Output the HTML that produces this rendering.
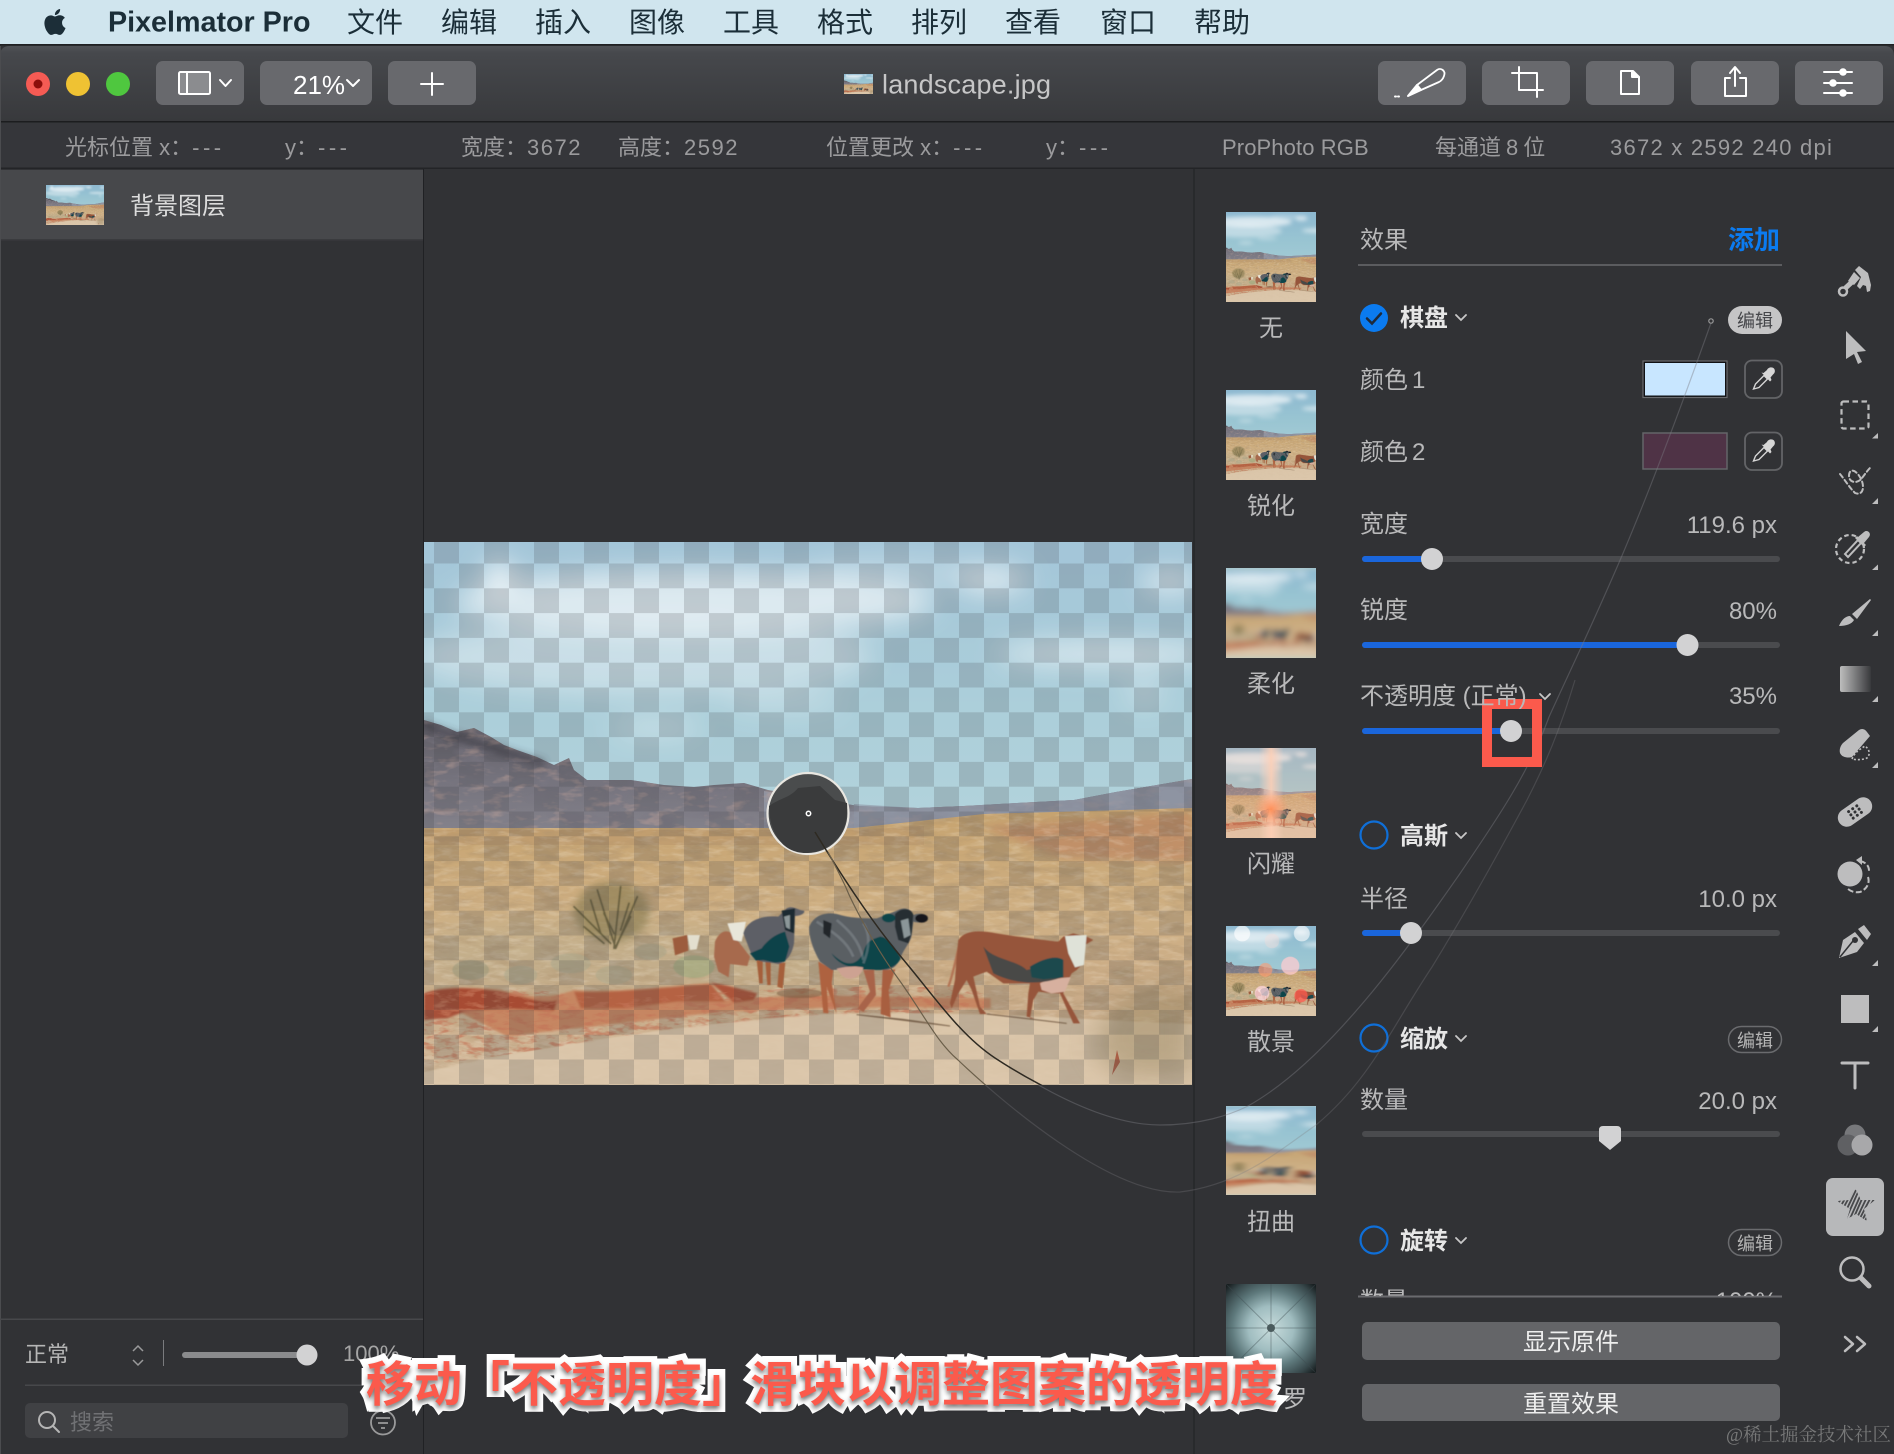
<!DOCTYPE html>
<html lang="zh"><head><meta charset="utf-8"><title>Pixelmator Pro</title>
<style>
html,body{margin:0;padding:0;background:#313235}
#p{position:relative;width:1894px;height:1454px;overflow:hidden;background:#313235;font-family:"Liberation Sans","Noto Sans CJK SC",sans-serif}
svg.a{position:absolute;left:0;top:0}
.t{position:absolute;white-space:nowrap;line-height:1;transform:translateY(-50%)}
.m{color:#1b2e38;font-size:28px}
.i{color:#9b9b9d;font-size:22px}
.i b{font-weight:400;letter-spacing:3.5px}
.i u{text-decoration:none;letter-spacing:1.5px}
.l{color:#b9b9ba;font-size:24px}
.c{text-align:center;transform:translate(-50%,-50%)}
.b{font-weight:700;color:#e6e6e6;font-size:24px}
.r{text-align:right;right:117px}
.p{font-size:18px;color:#b5b5b5}
</style></head><body><div id="p">
<svg class="a" width="1894" height="1454" viewBox="0 0 1894 1454">
<defs>
<linearGradient id="sky" x1="0" y1="0" x2="0" y2="1"><stop offset="0" stop-color="#8db8d0"/><stop offset=".55" stop-color="#98c4d2"/><stop offset="1" stop-color="#a2cad4"/></linearGradient>
<linearGradient id="gnd" x1="0" y1="0" x2="0" y2="1"><stop offset="0" stop-color="#c6a36f"/><stop offset=".4" stop-color="#cfb084"/><stop offset=".7" stop-color="#c9ab88"/><stop offset="1" stop-color="#d8c0a2"/></linearGradient>
<linearGradient id="mt" x1="0" y1="0" x2="0" y2="1"><stop offset="0" stop-color="#5f5c64"/><stop offset=".5" stop-color="#74727c"/><stop offset="1" stop-color="#85838c"/></linearGradient>
<linearGradient id="tb" x1="0" y1="0" x2="0" y2="1"><stop offset="0" stop-color="#505256"/><stop offset=".1" stop-color="#46484c"/><stop offset="1" stop-color="#38393c"/></linearGradient>
<linearGradient id="grad"><stop offset="0" stop-color="#bdbdbd"/><stop offset="1" stop-color="#38393c"/></linearGradient>
<radialGradient id="kal" r="72%"><stop offset="0" stop-color="#c8dcdc"/><stop offset=".35" stop-color="#a0bdc0"/><stop offset=".6" stop-color="#5f7a7d"/><stop offset=".82" stop-color="#37474a"/><stop offset="1" stop-color="#0c0f10"/></radialGradient>
<radialGradient id="fl"><stop offset="0" stop-color="#ff8a50" stop-opacity=".9"/><stop offset="1" stop-color="#ff9a70" stop-opacity="0"/></radialGradient>
<linearGradient id="fl2"><stop offset="0" stop-color="#ffe0d0" stop-opacity="0"/><stop offset=".5" stop-color="#ffd8c0" stop-opacity=".85"/><stop offset="1" stop-color="#ffe0d0" stop-opacity="0"/></linearGradient>
<filter id="b3" x="-30%" y="-100%" width="160%" height="300%"><feGaussianBlur stdDeviation="13"/></filter>
<filter id="b4" x="-30%" y="-100%" width="160%" height="300%"><feGaussianBlur stdDeviation="4"/></filter>
<filter id="b1" x="-10%" y="-10%" width="120%" height="120%"><feGaussianBlur stdDeviation=".8"/></filter>
<filter id="b2" x="-5%" y="-5%" width="110%" height="110%"><feGaussianBlur stdDeviation="1.600"/></filter>
<filter id="b5" x="-5%" y="-5%" width="110%" height="110%"><feGaussianBlur stdDeviation="3.500"/></filter>
<filter id="soft" x="-5%" y="-5%" width="110%" height="110%"><feGaussianBlur stdDeviation="20"/></filter>
<filter id="mot" x="-5%" y="-5%" width="110%" height="110%"><feGaussianBlur stdDeviation="22 7"/></filter>
<filter id="grain" x="0" y="0" width="100%" height="100%"><feTurbulence type="fractalNoise" baseFrequency=".035 .12" numOctaves="4" seed="7"/><feColorMatrix values="0 0 0 0 .42  0 0 0 0 .29  0 0 0 0 .16  3 0 0 0 -1.4"/></filter>
<filter id="grain2" x="0" y="0" width="100%" height="100%"><feTurbulence type="fractalNoise" baseFrequency=".06 .2" numOctaves="3" seed="21"/><feColorMatrix values="0 0 0 0 .93  0 0 0 0 .86  0 0 0 0 .74  3 0 0 0 -1.4"/></filter>
<filter id="rock" x="0" y="0" width="100%" height="100%"><feTurbulence type="fractalNoise" baseFrequency=".03 .07" numOctaves="4" seed="3"/><feColorMatrix values="0 0 0 0 .2  0 0 0 0 .19  0 0 0 0 .23  3.6 0 0 0 -1.65"/></filter>
<filter id="rust" x="0" y="0" width="100%" height="100%"><feTurbulence type="fractalNoise" baseFrequency=".05 .12" numOctaves="3" seed="12"/><feColorMatrix values="0 0 0 0 .52  0 0 0 0 .36  0 0 0 0 .32  4 0 0 0 -2.1"/></filter>
<filter id="redn" x="0" y="0" width="100%" height="100%"><feTurbulence type="fractalNoise" baseFrequency=".07 .18" numOctaves="3" seed="5"/><feColorMatrix values="0 0 0 0 .55  0 0 0 0 .18  0 0 0 0 .1  4 0 0 0 -1.9"/></filter>
<clipPath id="gc"><path d="M0 286H430L560 272L768 266V543H0Z"/></clipPath>
<clipPath id="mc"><path d="M0 178L17 183 33 190 50 186 67 195 80 203 93 208 113 215 130 223 145 216 150 228 163 238 183 238 207 238 240 243 270 245 290 243 320 241 344 248 400 258 434 264 494 266 540 264 593 261 650 258 692 250 768 237V292H0Z"/></clipPath>
<clipPath id="rc"><path d="M0 452C20 446 80 444 130 450 190 462 260 452 330 448 440 444 500 442 560 450V470C440 472 380 476 250 490 120 505 50 520 0 522Z"/></clipPath>
<clipPath id="in"><rect x="424" y="542" width="768" height="543"/></clipPath>
<clipPath id="out"><path d="M0 0H1894V1454H0ZM424 542V1085H1192V542Z" clip-rule="evenodd"/></clipPath>
<clipPath id="star"><path d="M-18-5L-6-6 0-18 6-6 20-6 9 3 12 15 1 8-8 13-5 3Z"/></clipPath>
<pattern id="chk" x="10" y="-3.3" width="50" height="49.6" patternUnits="userSpaceOnUse"><rect width="25" height="24.8" fill="#3d4042"/><rect x="25" y="24.8" width="25" height="24.8" fill="#3d4042"/></pattern>
<g id="skyg">
<rect width="768" height="300" fill="url(#sky)"/>
<g fill="#fff" filter="url(#b3)">
<ellipse cx="270" cy="60" rx="240" ry="32" opacity=".65"/><ellipse cx="220" cy="115" rx="230" ry="38" opacity=".4"/><ellipse cx="75" cy="35" rx="15" ry="18" opacity=".8"/><ellipse cx="568" cy="38" rx="36" ry="14" opacity=".65"/><ellipse cx="745" cy="40" rx="28" ry="10" opacity=".75"/><ellipse cx="680" cy="112" rx="110" ry="13" opacity=".6"/><ellipse cx="232" cy="186" rx="44" ry="8" opacity=".45"/><ellipse cx="360" cy="160" rx="60" ry="10" opacity=".3"/><ellipse cx="720" cy="150" rx="20" ry="16" opacity=".3"/><ellipse cx="470" cy="30" rx="90" ry="16" opacity=".25"/>
</g>
</g>
<g id="land">
<path d="M0 178L17 183 33 190 50 186 67 195 80 203 93 208 113 215 130 223 145 216 150 228 163 238 183 238 207 238 240 243 270 245 290 243 320 241 344 248 400 258 434 264 494 266 540 264 593 261 650 258 692 250 768 237V292H0Z" fill="url(#mt)"/>
<path d="M340 249L434 264 494 266 540 264 593 261 650 258 692 250 768 237V292H340Z" fill="#8f93a0"/>
<rect width="768" height="292" filter="url(#rock)" clip-path="url(#mc)" opacity=".55"/>
<rect width="768" height="292" filter="url(#rust)" clip-path="url(#mc)" opacity=".45"/>
<path d="M0 183C30 195 80 210 120 222" fill="none" stroke="#33323a" stroke-width="7" opacity=".6" filter="url(#b4)"/>
<path d="M430 262L494 266 540 264 593 261 650 258 692 250 768 237V292H430Z" fill="#8e95a3" opacity=".6"/>
<path d="M0 286H430L560 272L768 266V543H0Z" fill="url(#gnd)"/>
<path d="M560 285L768 270V320L640 316Z" fill="#bb7a5c" opacity=".5" filter="url(#b4)"/>
<path d="M0 288H430L500 284V303H0Z" fill="#b8946a" opacity=".45"/>
<path d="M0 390C100 370 300 380 420 400L420 448 0 450Z" fill="#b9b092" opacity=".42" filter="url(#b3)"/>
<rect y="260" width="768" height="283" filter="url(#grain)" clip-path="url(#gc)" opacity=".42"/>
<rect y="260" width="768" height="283" filter="url(#grain2)" clip-path="url(#gc)" opacity=".22"/>
<ellipse cx="188" cy="370" rx="38" ry="30" fill="#85794f" opacity=".6" filter="url(#b4)"/>
<g transform="translate(0 158) scale(.3333)" fill="none" stroke="#575135" stroke-width="5" stroke-linecap="round" filter="url(#b2)">
<path d="M575 745L520 570M570 745L590 560M575 745L640 590M560 730L450 620M540 730L480 680M575 740L620 650M530 700L500 600M570 700L540 640M590 690L615 610" opacity=".8"/>
<ellipse cx="810" cy="800" rx="62" ry="34" fill="#a3ab80" stroke="none" opacity=".7"/>
<ellipse cx="140" cy="810" rx="55" ry="30" fill="#99977a" stroke="none" opacity=".55"/>
<ellipse cx="290" cy="825" rx="50" ry="28" fill="#aca78c" stroke="none" opacity=".55"/>
<ellipse cx="440" cy="790" rx="60" ry="30" fill="#aca78c" stroke="none" opacity=".55"/>
<ellipse cx="570" cy="825" rx="55" ry="28" fill="#aca78c" stroke="none" opacity=".5"/>
<ellipse cx="680" cy="755" rx="48" ry="24" fill="#aca78c" stroke="none" opacity=".5"/>
</g>
<g transform="translate(0 158) scale(.3333)" filter="url(#b5)">
<path d="M0 880C60 860 120 860 230 870 300 890 370 900 450 870 560 880 700 860 860 850L900 900 1140 885 1400 890 1700 895 1700 925C1400 920 1200 920 900 935 640 965 400 990 250 1010 100 1070 0 1090Z" fill="#c5825c" opacity=".9"/>
<path d="M0 880C60 860 130 860 230 875 300 890 360 915 400 900L390 932 250 926 130 932 70 955 0 960Z" fill="#a1412a" opacity=".85"/>
<path d="M450 875C560 880 700 865 860 852L905 905 760 905 600 925 470 925Z" fill="#ae5236" opacity=".7"/>
<path d="M860 848C890 850 960 870 1000 880L990 900 930 908Z" fill="#a84a30" opacity=".9"/>
</g>
<rect y="430" width="768" height="100" filter="url(#redn)" clip-path="url(#rc)" opacity=".7"/>
<path d="M0 530C130 502 260 482 400 472 540 468 660 478 768 482V543H0Z" fill="#dcc8ac" opacity=".88" filter="url(#b1)"/>
<path d="M670 510C680 450 720 440 768 445V535H700Z" fill="#9a8763" opacity=".5" filter="url(#b3)"/>
<path d="M688 533L693 508 696 520Z" fill="#9e3c26" opacity=".7"/>
</g>
<g id="cows" transform="translate(226 348) scale(.3333)" filter="url(#b2)">
<ellipse cx="450" cy="310" rx="70" ry="14" fill="#7a5a40" opacity=".55"/>
<path d="M620 374L900 408 760 388Z M1010 372L1250 400 1100 382Z" fill="#5f4632" stroke="#5f4632" stroke-width="3" opacity=".75"/>
<path d="M68 145L112 135 115 182 75 196Z" fill="#9c5b3d"/><path d="M112 135L150 135 140 178 120 180Z" fill="#e3dfcf"/>
<path d="M195 155C210 118 240 112 262 150L300 200 292 228 240 222 236 262 205 245 192 200Z" fill="#a76a4e"/><path d="M232 100L288 95 275 155 250 150Z" fill="#e8e6da"/>
<path d="M320 212L328 280 338 280 338 212ZM346 212L352 285 362 285 362 212ZM388 220L382 290 398 296 406 218Z" fill="#a55f3a"/>
<path d="M280 130C290 95 330 75 385 80L410 55C430 45 440 60 462 62 467 70 450 78 435 78L432 160C425 195 410 215 385 222 355 215 320 220 305 195Z" fill="#5d5e66"/>
<path d="M300 190L335 175C350 155 370 135 405 125L418 170 405 215 375 218 340 210 318 212Z" fill="#0f4349"/>
<path d="M395 62L435 55 432 130 405 120Z" fill="#1f2b30"/><path d="M402 80L420 75 420 118 408 112Z" fill="#8c9799"/>
<path d="M505 215L520 368 535 370 530 290 560 372 545 280 550 240Z" fill="#ae6240"/>
<path d="M640 240L660 305 622 355 640 366 678 315 672 240Z" fill="#a8644a"/>
<path d="M698 240L692 372 722 382 716 300 736 238Z" fill="#a85e40"/>
<path d="M478 110C490 80 520 65 560 72 600 85 640 85 680 85L715 72 745 60C765 50 785 58 790 75L800 72C820 68 838 80 830 92 815 100 800 98 790 95L785 135C782 155 770 165 755 195 745 220 735 240 700 240L640 238 590 238 545 240 510 215C490 180 475 140 478 110Z" fill="#5a5f64"/>
<path d="M545 190C590 235 620 225 640 190 650 150 665 150 690 140 710 140 735 170 752 205 740 235 700 240 680 240L640 238C600 232 565 225 545 190Z" fill="#0f444a"/>
<path d="M500 95C540 120 590 150 610 200M560 90C590 115 630 150 640 210M640 100C660 130 660 170 640 220" fill="none" stroke="#8f9499" stroke-width="8" opacity=".45"/>
<path d="M520 90L545 100 540 145 520 130Z" fill="#22282c"/>
<path d="M560 236C590 228 620 228 640 232 635 260 600 278 575 256Z" fill="#cda292"/>
<path d="M735 72C755 50 785 55 790 75L785 130 775 160 745 150 735 110Z" fill="#252e33"/>
<path d="M752 92L775 85 782 135 762 145Z" fill="#8b9698"/>
<ellipse cx="716" cy="84" rx="20" ry="13" fill="#0f444a"/><ellipse cx="815" cy="85" rx="19" ry="13" fill="#15191b"/>
<path d="M932 150C918 200 912 245 895 290" fill="none" stroke="#b37555" stroke-width="7"/>
<path d="M925 150C945 120 985 120 1040 130 1100 140 1180 150 1225 155L1240 140 1270 130 1310 140 1330 150 1305 165 1300 220 1280 240 1265 250 1250 280 1240 310 1290 400 1270 400 1230 310 1210 310 1165 305 1150 330 1140 385 1155 385 1130 380 1135 310 1140 280 1060 280 1010 245 970 260 990 350 1010 372 990 372 965 300 950 270 925 310 905 355 900 340 915 270 920 200Z" fill="#96553a"/>
<path d="M1170 280C1190 268 1240 262 1262 262L1245 305 1205 310 1175 300Z" fill="#d7b09f"/>
<path d="M1000 170C1030 210 1100 210 1130 240 1180 230 1240 200 1240 260 1180 285 1100 285 1030 250 1000 210Z" fill="#4a4a46"/>
<path d="M1140 230C1180 205 1220 195 1240 210L1240 262 1180 268 1145 262Z" fill="#1e4a4e"/>
<path d="M1245 138L1310 135 1302 225 1275 232 1255 190Z" fill="#dfe2d8"/>
</g>
<g id="scene"><use href="#skyg"/><use href="#land"/><use href="#cows"/></g>
</defs>
<rect width="1894" height="45" fill="#d0e5ee"/>
<path d="M0 121V56Q0 46 10 46H1884Q1894 46 1894 56V121Z" fill="url(#tb)"/>
<rect y="44" width="1894" height="1.5" fill="#202123"/>
<rect y="121" width="1894" height="1.5" fill="#1c1d1f"/>
<rect y="122.500" width="1894" height="45.500" fill="#35363a"/>
<rect y="167.500" width="1894" height="1.500" fill="#232427"/>
<rect x="0" y="170" width="423" height="70" fill="#47484b"/>
<rect x="0" y="239" width="423" height="1.500" fill="#3a3b3e"/>
<rect x="423" y="169" width="1" height="1285" fill="#202124"/>
<rect x="1193.500" y="169" width="1" height="1285" fill="#202124"/>
<rect x="0" y="46" width="1" height="1408" fill="#4b4c4f"/>
<g transform="translate(42 9) scale(1.08)"><path fill="#1c2e38" d="M12.152 6.896c-.948 0-2.415-1.078-3.96-1.04-2.04.027-3.91 1.183-4.961 3.014-2.117 3.675-.546 9.103 1.519 12.09 1.013 1.454 2.208 3.09 3.792 3.039 1.52-.065 2.09-.987 3.935-.987 1.831 0 2.35.987 3.96.948 1.637-.026 2.676-1.48 3.676-2.948 1.156-1.688 1.636-3.325 1.662-3.415-.039-.013-3.182-1.221-3.22-4.857-.026-3.04 2.48-4.494 2.597-4.559-1.429-2.09-3.623-2.324-4.39-2.376-2-.156-3.675 1.09-4.61 1.09zM15.53 3.83c.843-1.012 1.4-2.427 1.245-3.83-1.207.052-2.662.805-3.532 1.818-.78.896-1.454 2.338-1.273 3.714 1.338.104 2.715-.688 3.559-1.701"/></g>
<circle cx="38" cy="84" r="12" fill="#f55b54"/><circle cx="38" cy="84" r="4.500" fill="#8c0f0c"/>
<circle cx="78" cy="84" r="12" fill="#efc233"/><circle cx="118" cy="84" r="12" fill="#4fc73f"/>
<g fill="#68696d">
<rect x="156" y="61" width="88" height="44" rx="7"/><rect x="260" y="61" width="112" height="44" rx="7"/><rect x="388" y="61" width="88" height="44" rx="7"/>
<rect x="1378" y="61" width="88" height="44" rx="7"/><rect x="1482" y="61" width="88" height="44" rx="7"/><rect x="1586" y="61" width="88" height="44" rx="7"/><rect x="1691" y="61" width="88" height="44" rx="7"/><rect x="1795" y="61" width="88" height="44" rx="7"/>
</g>
<g fill="none" stroke="#fff" stroke-width="2" stroke-linecap="round" stroke-linejoin="round">
<rect x="179" y="72" width="31" height="22" rx="1.500" fill="#8b8c8f"/><path d="M187 72V94"/><path d="M220 80l5.500 6 5.500-6"/>
<path d="M347 80l6 6 6-6"/>
<path d="M432 73V95M421 84H443"/>
<path d="M1417 85L1437 70C1441 67 1446 71 1444 76 1443 79 1441 81 1439 82L1421 90Z" stroke-width="1.800"/><path d="M1408 96L1417 85 1421 90Z" fill="#fff"/><path d="M1395 96.500h6" stroke-dasharray="1 2"/>
<path d="M1519 67V90H1543M1512 73H1537V97" stroke-width="2"/>
<path d="M1621 71H1633L1639 77V94H1621Z"/><path d="M1632 71L1639 77H1632Z" fill="#fff"/>
<path d="M1735 68V86M1730 73L1735 67 1740 73"/><path d="M1730 78H1725V96H1746V78H1740"/>
<path d="M1824 72H1852M1824 83H1852M1824 93H1852"/>
</g>
<g fill="#fff"><circle cx="1843" cy="72" r="3.800"/><circle cx="1833" cy="83" r="3.800"/><circle cx="1843" cy="93" r="3.800"/></g>
<svg x="844" y="74" width="29" height="20" viewBox="0 0 768 543" preserveAspectRatio="xMidYMid slice"><use href="#scene"/></svg>
<svg x="46" y="185" width="58" height="40" viewBox="0 0 768 543" preserveAspectRatio="xMidYMid slice"><use href="#scene"/></svg>
<svg x="424" y="542" width="768" height="543" viewBox="0 0 768 543"><use href="#skyg"/><rect width="768" height="300" fill="#e8f0f4" opacity=".25"/><use href="#land"/><rect width="768" height="543" fill="url(#chk)" opacity=".19"/><use href="#cows"/></svg>
<circle cx="808" cy="813.500" r="40.500" fill="#4a4c4d" stroke="#e9e7e1" stroke-width="2.200"/>
<path d="M769 806C780 798 790 798 798 788L820 786 835 800 847 803C848 818 845 830 838 838 820 858 790 858 778 838 771 828 769 815 769 806Z" fill="#3a3b3c"/>
<circle cx="808.500" cy="813.500" r="2.200" fill="none" stroke="#fff" stroke-width="1.500"/>
<g>
<svg x="1226" y="212" width="90" height="90" viewBox="0 0 768 543" preserveAspectRatio="xMidYMid slice"><use href="#scene"/></svg>
<svg x="1226" y="390" width="90" height="90" viewBox="0 0 768 543" preserveAspectRatio="xMidYMid slice"><use href="#scene"/></svg>
<svg x="1226" y="568" width="90" height="90" viewBox="0 0 768 543" preserveAspectRatio="xMidYMid slice"><rect width="768" height="543" fill="#b8cfc8"/><g filter="url(#soft)"><use href="#scene"/></g></svg>
<svg x="1226" y="748" width="90" height="90" viewBox="0 0 768 543" preserveAspectRatio="xMidYMid slice"><use href="#scene"/><rect x="310" width="150" height="543" fill="url(#fl2)"/><rect width="768" height="543" fill="#ffb090" opacity=".22"/><circle cx="385" cy="370" r="110" fill="url(#fl)"/></svg>
<svg x="1226" y="926" width="90" height="90" viewBox="0 0 768 543" preserveAspectRatio="xMidYMid slice"><use href="#scene"/><g filter="url(#b1)"><circle cx="210" cy="45" r="48" fill="#fff" opacity=".65"/><circle cx="570" cy="45" r="48" fill="#fff" opacity=".6"/><circle cx="390" cy="90" r="44" fill="#ffd9d4" opacity=".3"/><circle cx="500" cy="240" r="55" fill="#ffccd0" opacity=".75"/><circle cx="350" cy="265" r="42" fill="#ff9a70" opacity=".6"/><circle cx="330" cy="405" r="44" fill="#ffd8e0" opacity=".75"/><circle cx="565" cy="420" r="40" fill="#ff5a50" opacity=".75"/></g></svg>
<svg x="1226" y="1106" width="90" height="89" viewBox="0 0 768 543" preserveAspectRatio="xMidYMid slice"><rect width="768" height="543" fill="#b8cfc8"/><g filter="url(#mot)"><use href="#scene"/></g></svg>
<rect x="1226" y="1284" width="90" height="89" fill="url(#kal)"/>
<g stroke="#3e4c50" stroke-width="1" opacity=".4"><path d="M1226 1284L1316 1373M1316 1284L1226 1373M1271 1284V1373M1226 1328H1316"/></g>
<circle cx="1271" cy="1328" r="4" fill="#4a5a5c"/>
</g>
<rect x="1358" y="264" width="424" height="2" fill="#5b5c5f"/>
<rect x="1358" y="1295.500" width="424" height="2" fill="#6a6b6e"/>
<circle cx="1374" cy="318" r="14" fill="#0b7bf0"/><path d="M1367 318.500l5 5 9-10" fill="none" stroke="#1e2a3a" stroke-width="2.500" stroke-linecap="round"/>
<g fill="none" stroke="#0f6fd8" stroke-width="2.200"><circle cx="1374" cy="835" r="13.500"/><circle cx="1374" cy="1038" r="13.500"/><circle cx="1374" cy="1240" r="13.500"/></g>
<g fill="none" stroke="#c8c8c8" stroke-width="1.800" stroke-linecap="round"><path d="M1456 315l5 5 5-5M1456 833l5 5 5-5M1456 1036l5 5 5-5M1456 1238l5 5 5-5"/><path d="M1540 694l5 5 5-5"/></g>
<rect x="1728" y="306" width="54" height="28" rx="14" fill="#c5c5c6"/>
<g fill="none" stroke="#6a6b6e" stroke-width="1.500"><rect x="1728.500" y="1026.500" width="53" height="26" rx="13"/><rect x="1728.500" y="1229.500" width="53" height="26" rx="13"/></g>
<circle cx="1711" cy="321" r="2.200" fill="#313235" stroke="#999" stroke-width="1.200"/>
<rect x="1643" y="361" width="84" height="36.500" fill="#101114" stroke="#6a6b6e" stroke-width="1.200"/><rect x="1645" y="363" width="80" height="32.500" fill="#c8e6ff"/>
<rect x="1643" y="433" width="84" height="36" fill="#4f3346" stroke="#646568" stroke-width="1.500"/>
<g fill="none" stroke="#636467" stroke-width="1.800"><rect x="1745" y="360.500" width="37" height="37.500" rx="7"/><rect x="1745" y="432.500" width="37" height="37.500" rx="7"/></g>
<g id="dr"><path d="M1753.500 389L1755.500 384 1764 375.500 1767.500 379 1759 387.500Z" fill="none" stroke="#d6d6d6" stroke-width="1.400"/><path d="M1761.500 372.500L1763.500 373 1767 370C1768 367.500 1772 366.500 1774 368.500 1775.500 370.500 1775 373 1773 374.500L1770.500 377.500 1771.500 380 1770 381.500Z" fill="#d6d6d6"/></g>
<g transform="translate(0 72)"><path d="M1753.500 389L1755.500 384 1764 375.500 1767.500 379 1759 387.500Z" fill="none" stroke="#d6d6d6" stroke-width="1.400"/><path d="M1761.500 372.500L1763.500 373 1767 370C1768 367.500 1772 366.500 1774 368.500 1775.500 370.500 1775 373 1773 374.500L1770.500 377.500 1771.500 380 1770 381.500Z" fill="#d6d6d6"/></g>
<g fill="#4a4b4e"><rect x="1362" y="556" width="418" height="6" rx="3"/><rect x="1362" y="642" width="418" height="6" rx="3"/><rect x="1362" y="728" width="418" height="6" rx="3"/><rect x="1362" y="930" width="418" height="6" rx="3"/><rect x="1362" y="1131" width="418" height="6" rx="3"/></g>
<g fill="#1a66dc"><rect x="1362" y="556" width="70" height="6" rx="3"/><rect x="1362" y="642" width="325" height="6" rx="3"/><rect x="1362" y="728" width="149" height="6" rx="3"/><rect x="1362" y="930" width="49" height="6" rx="3"/></g>
<g fill="none">
<g clip-path="url(#in)"><path d="M815 832C835 865 870 920 902 958S960 1035 995 1058 1110 1125 1160 1125" stroke="#2e2a22" stroke-width="1.500"/><path d="M828 852C835 865 845 885 847 890S870 940 897 977 935 1040 958 1060C1000 1100 1110 1195 1180 1192" stroke="#6b5f4a" stroke-width="1.200"/></g>
<g clip-path="url(#out)" stroke="rgba(125,125,130,.42)" stroke-width="1.200"><path d="M995 1058C1050 1095 1110 1125 1160 1125 1200 1125 1230 1115 1248 1106 1330 1060 1410 945 1459 875 1500 815 1530 770 1549 717 1575 660 1590 630 1621 558 1650 490 1680 410 1711 323"/><path d="M958 1060C1000 1100 1110 1195 1180 1192 1240 1185 1280 1150 1316 1125 1370 1080 1390 1030 1432 967 1470 905 1500 850 1527 800 1545 765 1560 730 1575 680" stroke="rgba(125,125,130,.3)"/></g>
</g>
<g fill="#d2d2d3"><circle cx="1432" cy="559" r="11"/><circle cx="1687.500" cy="645" r="11"/><circle cx="1511" cy="731" r="11"/><circle cx="1411" cy="933" r="11"/><path d="M1599 1130Q1599 1126 1603 1126H1617Q1621 1126 1621 1130V1141L1610 1150 1599 1141Z"/></g>
<rect x="1487" y="704" width="50" height="58" fill="none" stroke="#fb5a4c" stroke-width="10"/>
<g fill="#646568"><rect x="1362" y="1322" width="418" height="38" rx="5"/><rect x="1362" y="1384" width="418" height="37" rx="5"/></g>
<g fill="#bdbdbe" stroke="none">
<g transform="translate(1855 280)"><circle cx="-12" cy="11.500" r="4" fill="none" stroke="#bdbdbe" stroke-width="2.500"/><path d="M-9.500 8L-3 2" stroke="#bdbdbe" stroke-width="5"/><path d="M-7 1L-1-8 5-2-1 5Z"/><path d="M0-10L4-14 13-7 16 5 15 11 12 12 11 6 8 5 5 9 2 6 6-3Z"/></g>
<path transform="translate(1855 347)" d="M-9-16L11 4 2 5 7 15 3 17-1 7-9 12Z"/>
<rect x="1841.500" y="401.500" width="27" height="27" rx="2" fill="none" stroke="#bdbdbe" stroke-width="2.200" stroke-dasharray="5.500 3.500"/>
<g transform="translate(1855 481)" fill="none" stroke="#bdbdbe" stroke-width="2" stroke-dasharray="4.500 3" stroke-linecap="round"><path d="M-15-7C-10-1-6 6 0 12 8 15 10 6 6-2 1-12-6-13-6-5-6 2 3 3 7-3 10-7 13-11 15-13"/></g>
<g transform="translate(1855 546)"><circle cx="-5" cy="3" r="14" fill="none" stroke="#bdbdbe" stroke-width="2.200" stroke-dasharray="4.500 3"/><path d="M-10 8L3-6 6-3-7 11Z" fill="none" stroke="#bdbdbe" stroke-width="2"/><path d="M3-9L9-14C12-17 17-13 14-9L9-3 11-1 9 1 0-8 2-10Z"/></g>
<path transform="translate(1855 613)" d="M-16 13C-13 6-9 3-5 3L-1 7C-3 11-9 13-16 13ZM-3 1L15-14 16-13 2 6Z"/>
<rect x="1840" y="666" width="31" height="26" rx="2" fill="url(#grad)"/>
<g transform="translate(1855 745)"><path d="M-15 8C-16 4-14 0-12-2L4-15C7-17 10-16 12-13L15-9-3 12C-6 13-13 13-15 8Z"/><path d="M-3 14C0 7 4 5 10 1 14 4 16 9 12 13 7 15 1 15-3 14Z" fill="none" stroke="#bdbdbe" stroke-width="1.600" stroke-dasharray="2 2"/></g>
<g transform="translate(1855 812) rotate(-35)"><rect x="-19" y="-9" width="38" height="18" rx="9"/><g fill="#313235"><circle cx="-5" cy="-4" r="1.500"/><circle cx="0" cy="-4" r="1.500"/><circle cx="5" cy="-4" r="1.500"/><circle cx="-5" cy="0" r="1.500"/><circle cx="0" cy="0" r="1.500"/><circle cx="5" cy="0" r="1.500"/><circle cx="-5" cy="4" r="1.500"/><circle cx="0" cy="4" r="1.500"/><circle cx="5" cy="4" r="1.500"/></g></g>
<g transform="translate(1855 875)"><circle cx="-5" cy="-1" r="12.500"/><path d="M5-14C10-13 14-10 14-4M13 2C15 8 12 14 5 17-1 18-5 16-8 13" fill="none" stroke="#bdbdbe" stroke-width="2" stroke-dasharray="6 2.500"/><path d="M1-15L7-19 7-10Z"/></g>
<g transform="translate(1855 943)"><path d="M-16 15L-12-3 0-11 9 0 2 9Z"/><path d="M3-14L9-18 16-9 12-3Z"/><path d="M-15 14L-2-2" stroke="#313235" stroke-width="1.500"/><circle cx="0" cy="-3" r="3" fill="#313235"/></g>
<rect x="1841" y="995" width="28" height="28"/>
<path d="M1842 1063H1868M1855 1063V1088" fill="none" stroke="#bdbdbe" stroke-width="3" stroke-linecap="round"/>
<g transform="translate(1855 1141)"><circle cx="0" cy="-6" r="10.500" fill="#77787b"/><circle cx="-7" cy="4" r="10.500" fill="#5f6063"/><circle cx="7" cy="4" r="10.500" fill="#a8a8aa"/></g>
<rect x="1826" y="1178" width="58" height="58" rx="7" fill="#b7b8ba"/>
<g transform="translate(1855 1206)" clip-path="url(#star)"><g stroke="#47484b" stroke-width="1.800" fill="none"><path d="M-22 4L-10-12M-19 8L-6-14M-16 10L-3-14M-13 13L1-16M-10 15L4-16M-7 17L7-14M-4 18L10-14M-1 18L13-11M2 18L16-9M5 18L19-7M8 18L22-6M11 18L25-5"/></g></g>
<g fill="none" stroke="#bdbdbe"><circle cx="1852" cy="1269" r="11.500" stroke-width="2.500"/><path d="M1861 1278L1869 1286" stroke-width="5" stroke-linecap="round"/><path d="M1845 1337L1853 1344 1845 1351M1857 1337L1865 1344 1857 1351" stroke-width="2.500" stroke-linecap="round" stroke-linejoin="round"/></g>
<path d="M1872 438.500L1878 433V438.500ZM1872 504L1878 498V504ZM1872 570L1878 564.500V570ZM1872 636L1878 630V636ZM1872 702L1878 696V702ZM1872 768L1878 762V768ZM1872 966L1878 960V966ZM1872 1032L1878 1026V1032Z"/>
</g>
<rect x="0" y="1318.500" width="423" height="1.500" fill="#47484b"/>
<rect x="25" y="1384.500" width="398" height="1.500" fill="#47484b"/>
<path d="M133 1351l5-5 5 5M133 1360l5 5 5-5" fill="none" stroke="#9a9a9b" stroke-width="1.500"/>
<rect x="163" y="1340" width="1" height="26" fill="#7a7b7e"/>
<rect x="182" y="1352" width="125" height="6" rx="3" fill="#8a8b8d"/><circle cx="307" cy="1355" r="10.500" fill="#d2d2d3"/>
<rect x="25" y="1403" width="323" height="35" rx="5" fill="#404144"/>
<circle cx="47" cy="1420" r="8" fill="none" stroke="#b5b5b5" stroke-width="2"/><path d="M53 1426L59 1432" stroke="#b5b5b5" stroke-width="2" stroke-linecap="round"/>
<circle cx="383" cy="1422.500" r="12" fill="none" stroke="#9a9a9b" stroke-width="1.800"/><path d="M376 1418H390M378 1423H388M381 1428H385" stroke="#9a9a9b" stroke-width="1.800"/>
</svg>

<div class="t b" style="left:108px;top:23px;font-size:28.700px;color:#1b2e38">Pixelmator Pro</div>
<div class="t m" style="left:347px;top:23px">文件</div><div class="t m" style="left:441px;top:23px">编辑</div><div class="t m" style="left:535px;top:23px">插入</div><div class="t m" style="left:629px;top:23px">图像</div><div class="t m" style="left:723px;top:23px">工具</div><div class="t m" style="left:817px;top:23px">格式</div><div class="t m" style="left:911px;top:23px">排列</div><div class="t m" style="left:1005px;top:23px">查看</div><div class="t m" style="left:1100px;top:23px">窗口</div><div class="t m" style="left:1194px;top:23px">帮助</div>
<div class="t" style="left:293px;top:85px;font-size:26px;color:#fff">21%</div>
<div class="t" style="left:882px;top:85px;font-size:27px;letter-spacing:.2px;color:#c6c6c7">landscape.jpg</div>
<div class="t i" style="left:65px;top:147.500px">光标位置 x：<b>---</b></div>
<div class="t i" style="left:285px;top:147.500px">y：<b>---</b></div>
<div class="t i" style="left:461px;top:147.500px">宽度：<u>3672</u></div>
<div class="t i" style="left:618px;top:147.500px">高度：<u>2592</u></div>
<div class="t i" style="left:826px;top:147.500px">位置更改 x：<b>---</b></div>
<div class="t i" style="left:1046px;top:147.500px">y：<b>---</b></div>
<div class="t i" style="left:1222px;top:147.500px;letter-spacing:.1px">ProPhoto RGB</div>
<div class="t i" style="left:1435px;top:147.500px">每通道<span style="margin-left:5px">8</span><span style="margin-left:5px">位</span></div>
<div class="t i" style="left:1610px;top:147.500px;letter-spacing:1.250px">3672 x 2592 240 dpi</div>
<div class="t" style="left:130px;top:206.500px;font-size:24px;color:#dcdcdc">背景图层</div>
<div class="t l c" style="left:1271px;top:328.500px">无</div><div class="t l c" style="left:1271px;top:506.500px">锐化</div><div class="t l c" style="left:1271px;top:685px">柔化</div><div class="t l c" style="left:1271px;top:865px">闪耀</div><div class="t l c" style="left:1271px;top:1042.500px">散景</div><div class="t l c" style="left:1271px;top:1222.500px">扭曲</div><div class="t l c" style="left:1295px;top:1400px">罗</div>
<div class="t l" style="left:1360px;top:240.500px">效果</div>
<div class="t" style="left:1728px;top:240px;font-size:26px;font-weight:700;color:#0b7bf0">添加</div>
<div class="t b" style="left:1400px;top:318.500px">棋盘</div><div class="t b" style="left:1400px;top:836.500px">高斯</div><div class="t b" style="left:1400px;top:1039.500px">缩放</div><div class="t b" style="left:1400px;top:1241.500px">旋转</div>
<div class="t p" style="left:1737px;top:321px;color:#45464a">编辑</div><div class="t p" style="left:1737px;top:1041px">编辑</div><div class="t p" style="left:1737px;top:1244px">编辑</div>
<div class="t l" style="left:1360px;top:380.500px">颜色<span style="margin-left:4px">1</span></div><div class="t l" style="left:1360px;top:452.500px">颜色<span style="margin-left:4px">2</span></div>
<div class="t l" style="left:1360px;top:524.500px">宽度</div><div class="t l r" style="top:526px">119.6 px</div>
<div class="t l" style="left:1360px;top:610.500px">锐度</div><div class="t l r" style="top:612px">80%</div>
<div class="t l" style="left:1360px;top:696.500px">不透明度 (正常)</div><div class="t l r" style="top:697px">35%</div>
<div class="t l" style="left:1360px;top:899.500px">半径</div><div class="t l r" style="top:900px">10.0 px</div>
<div class="t l" style="left:1360px;top:1100.500px">数量</div><div class="t l r" style="top:1102px">20.0 px</div>
<div style="position:absolute;left:1360px;top:1285px;width:420px;height:10.500px;overflow:hidden"><span class="l" style="position:absolute;left:0;top:5px;line-height:1">数量</span><span class="l" style="position:absolute;right:3px;top:5px;line-height:1">100%</span></div>
<div class="t c" style="left:1571px;top:1343px;font-size:24px;color:#eee">显示原件</div>
<div class="t c" style="left:1571px;top:1405px;font-size:24px;color:#eee">重置效果</div>
<div class="t" style="left:25px;top:1355px;font-size:22px;color:#b5b5b5">正常</div>
<div class="t" style="left:343px;top:1354px;font-size:22px;color:#a5a5a5">100%</div>
<div class="t" style="left:70px;top:1422.500px;font-size:22px;color:#707174">搜索</div>
<div class="t" style="left:1726px;top:1436px;font-size:18.500px;color:rgba(150,150,150,.7);font-family:'Liberation Serif','Noto Serif CJK SC',serif">@稀土掘金技术社区</div>
<div class="t" style="left:366px;top:1386px;font-size:48px;font-weight:700;color:#fb5a4c;-webkit-text-stroke:12px #fff;paint-order:stroke fill;text-shadow:0 3px 5px rgba(0,0,0,.55)">移动「不透明度」滑块以调整图案的透明度</div>
</div></body></html>
